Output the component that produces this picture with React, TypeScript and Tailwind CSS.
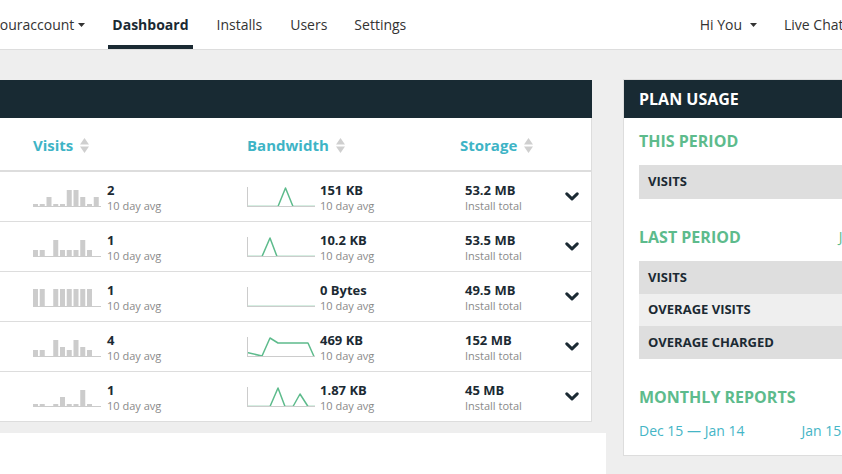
import React from "react";

type Row = {
  visits: number[];
  visitAvg: string;
  band: string;
  bandValue: string;
  storage: string;
};

const rows: Row[] = [
  { visits: [3, 3, 10, 3, 3, 17, 17, 10, 3, 10], visitAvg: "2", band: "0,19.5 31,19.5 38.5,1 46,19.5 68,19.5", bandValue: "151 KB", storage: "53.2 MB" },
  { visits: [7, 7, 0, 17, 7, 7, 7, 17, 7, 0], visitAvg: "1", band: "0,19.5 15,19.5 23,1 30,19.5 68,19.5", bandValue: "10.2 KB", storage: "53.5 MB" },
  { visits: [18, 18, 0, 18, 18, 18, 18, 18, 18, 0], visitAvg: "1", band: "0,19.5 68,19.5", bandValue: "0 Bytes", storage: "49.5 MB" },
  { visits: [7, 7, 0, 17, 10, 7, 17, 10, 7, 0], visitAvg: "4", band: "0,15.5 15,19 23,1 31,6 61,6 67,19.5", bandValue: "469 KB", storage: "152 MB" },
  { visits: [3, 3, 0, 3, 10, 3, 3, 17, 3, 0], visitAvg: "1", band: "0,19.5 23,19.5 31,1 38,19.5 46,19.5 53,7 61,19.5 68,19.5", bandValue: "1.87 KB", storage: "45 MB" },
];

function Caret({ className }: { className: string }) {
  return (
    <svg width="7" height="4" viewBox="0 0 7 4" className={className}>
      <path d="M0 0 L7 0 L3.5 4 Z" fill="#333" />
    </svg>
  );
}

function Sort() {
  return (
    <svg width="9" height="15" viewBox="0 0 9 15" className="ml-[7px]">
      <path d="M0 6.5 L4.5 0 L9 6.5 Z" fill="#cfcfcf" />
      <path d="M0 8.5 L4.5 15 L9 8.5 Z" fill="#cfcfcf" />
    </svg>
  );
}

function Bars({ values }: { values: number[] }) {
  return (
    <svg width="68" height="20" viewBox="0 0 68 20">
      {values.map((h, i) => (
        <rect key={i} x={i * 6.75} y={20 - h} width="5" height={h} fill="#cccccc" />
      ))}
      <rect x="0" y="19" width="68" height="1" fill="#cccccc" />
    </svg>
  );
}

function Line({ points }: { points: string }) {
  return (
    <svg width="68" height="20" viewBox="0 0 68 20">
      <polyline points={points} fill="none" stroke="#5dbb8c" strokeWidth="1.5" strokeLinejoin="round" />
      <rect x="0" y="0" width="1" height="20" fill="#cccccc" />
      <rect x="0" y="19" width="68" height="1" fill="#cccccc" />
    </svg>
  );
}

function Stat({ value, label }: { value: string; label: string }) {
  return (
    <div className="flex flex-col mt-[3px]">
      <span className="text-[13px] leading-[15px] font-bold text-[#1b2a33]">{value}</span>
      <span className="text-[11px] leading-[15px] text-[#8a8a8a]">{label}</span>
    </div>
  );
}

function UsageRow({ label, light }: { label: string; light?: boolean }) {
  return (
    <div className={`flex items-center px-[9px] font-bold text-[13px] text-[#1b2a33] ${light ? "h-[32px] bg-[#efefef]" : "h-[33px] bg-[#dedede]"}`}>
      {label}
    </div>
  );
}

export default function App() {
  return (
    <div className="w-[842px] h-[474px] overflow-hidden bg-[#eeeeee] font-['Open_Sans',sans-serif]">
      <nav className="h-[50px] bg-white border-b border-[#dddddd] flex items-stretch text-[14px] text-[#333]">
        <div className="flex items-center ml-[-8px] whitespace-nowrap">
          Youraccount
          <Caret className="ml-[4px] mt-[1px]" />
        </div>
        <div className="ml-[23px] px-[4px] pt-[3px] flex items-center font-bold text-[#1b2a33] border-b-4 border-[#1b2a33]">
          Dashboard
        </div>
        <div className="ml-[20px] px-[4px] flex items-center">Installs</div>
        <div className="ml-[20px] px-[4px] flex items-center">Users</div>
        <div className="ml-[19px] px-[4px] flex items-center">Settings</div>
        <div className="ml-auto flex items-center whitespace-nowrap">
          Hi You
          <Caret className="ml-[8px] mt-[1px]" />
        </div>
        <div className="ml-[27px] w-[58px] shrink-0 flex items-center whitespace-nowrap">Live Chat</div>
      </nav>

      <div className="flex items-start pt-[30px]">
        <div className="w-[592px] shrink-0">
          <div className="h-[38px] bg-[#182a33]" />
          <div className="bg-white border-r border-[#dddddd]">
            <div className="h-[54px] pt-[3px] flex items-center border-b-2 border-[#dddddd] text-[15px] font-bold text-[#3eb4c6]">
              <div className="w-[247px] pl-[33px] flex items-center">
                Visits
                <Sort />
              </div>
              <div className="w-[213px] flex items-center">
                Bandwidth
                <Sort />
              </div>
              <div className="flex items-center">
                Storage
                <Sort />
              </div>
            </div>
            {rows.map((r, i) => (
              <div key={i} className="h-[50px] flex items-center border-b border-[#dddddd]">
                <div className="w-[247px] pl-[33px] flex items-center gap-[6px]">
                  <Bars values={r.visits} />
                  <Stat value={r.visitAvg} label="10 day avg" />
                </div>
                <div className="w-[213px] flex items-center gap-[5px]">
                  <Line points={r.band} />
                  <Stat value={r.bandValue} label="10 day avg" />
                </div>
                <div className="flex-1 flex items-center pl-[5px] pr-[12px]">
                  <Stat value={r.storage} label="Install total" />
                  <svg width="14" height="9" viewBox="0 0 14 9" className="ml-auto">
                    <path d="M1.8 1.8 L7 6.8 L12.2 1.8" fill="none" stroke="#1b2a33" strokeWidth="3" strokeLinecap="round" strokeLinejoin="round" />
                  </svg>
                </div>
              </div>
            ))}
          </div>
          <div className="mt-[11px] w-[606px] h-[60px] bg-white" />
        </div>

        <div className="ml-[31px] -mt-px w-[330px] shrink-0 border border-[#dddddd] bg-white">
          <div className="h-[38px] px-[15px] flex items-center text-[16px] font-bold text-white bg-[#182a33]">
            PLAN USAGE
          </div>
          <div className="px-[15px] pt-[12px] pb-[14px]">
            <div className="text-[16px] leading-[22px] font-bold text-[#5dbb8c]">THIS PERIOD</div>
            <div className="mt-[13px] h-[34px] flex items-center px-[9px] bg-[#dedede] font-bold text-[13px] text-[#1b2a33]">
              VISITS
            </div>
            <div className="mt-[27px] flex items-center justify-between">
              <span className="text-[16px] leading-[22px] font-bold text-[#5dbb8c]">LAST PERIOD</span>
              <span className="mr-[-6px] text-[14px] leading-[22px] text-[#5dbb8c]">Jan 15 — Feb 14</span>
            </div>
            <div className="mt-[13px]">
              <UsageRow label="VISITS" />
              <UsageRow label="OVERAGE VISITS" light />
              <UsageRow label="OVERAGE CHARGED" />
            </div>
            <div className="mt-[27px] text-[16px] leading-[22px] font-bold text-[#5dbb8c]">MONTHLY REPORTS</div>
            <div className="mt-[13px] flex gap-[57px] text-[14px] leading-[20px] text-[#45b5c6] whitespace-nowrap">
              <span>Dec 15 — Jan 14</span>
              <span>Jan 15 — Feb 14</span>
            </div>
          </div>
        </div>
      </div>
    </div>
  );
}
